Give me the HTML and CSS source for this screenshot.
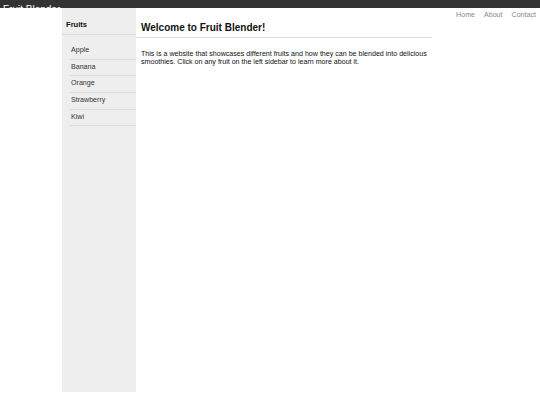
FILE: index.html
```html
<!DOCTYPE html>
<html>
<head>
<meta charset="utf-8">
<title>Fruit Blender</title>
<link rel="stylesheet" href="styles.css">
</head>
<body>
<header class="topbar">
  <div class="brand">Fruit Blender</div>
</header>
<div class="page">
  <aside class="sidebar">
    <h2 class="side-title">Fruits</h2>
    <ul class="fruit-list">
      <li>Apple</li>
      <li>Banana</li>
      <li>Orange</li>
      <li>Strawberry</li>
      <li>Kiwi</li>
    </ul>
  </aside>
  <main class="main">
    <h1 class="main-title">Welcome to Fruit Blender!</h1>
    <p class="intro">This is a website that showcases different fruits and how they can be blended into delicious smoothies. Click on any fruit on the left sidebar to learn more about it.</p>
  </main>
  <nav class="nav">
    <a>Home</a>
    <a>About</a>
    <a>Contact</a>
  </nav>
</div>
</body>
</html>
```

FILE: styles.css
```css
html, body {
  margin: 0;
  padding: 0;
  background: #fff;
  font-family: "Liberation Sans", Arial, sans-serif;
}
.topbar {
  height: 8px;
  background: #333;
}
.brand {
  color: #fff;
  font-size: 10px;
  line-height: 12px;
  padding-left: 3px;
  padding-top: 4px;
  white-space: nowrap;
}
.page {
  display: flex;
  align-items: flex-start;
  padding-left: 62px;
}
.sidebar {
  width: 74px;
  height: 384px;
  background: #eee;
  flex: none;
}
.side-title {
  margin: 0;
  font-size: 7.6px;
  font-weight: bold;
  color: #111;
  padding: 12px 4px 0 4px;
  height: 14px;
  line-height: 9px;
  border-bottom: 1px solid #ddd;
}
.fruit-list {
  list-style: none;
  margin: 8px 0 0 8px;
  padding: 0;
}
.fruit-list li {
  font-size: 7.1px;
  color: #333;
  height: 15.7px;
  line-height: 15.7px;
  padding-left: 1px;
  border-bottom: 1px solid #ddd;
}
.main {
  width: 296px;
  flex: none;
  background: #fff;
}
.main-title {
  margin: 0;
  font-size: 10px;
  font-weight: bold;
  color: #111;
  padding: 14px 0 0 5px;
  height: 15px;
  line-height: 12px;
  border-bottom: 1px solid #ddd;
}
.intro {
  margin: 12px 0 0 5px;
  font-size: 7.1px;
  line-height: 8px;
  color: #111;
}
.nav {
  margin-left: auto;
  padding: 3px 4px 0 0;
  display: flex;
  gap: 9px;
}
.nav a {
  font-size: 7.1px;
  color: #888;
  text-decoration: none;
}
```
